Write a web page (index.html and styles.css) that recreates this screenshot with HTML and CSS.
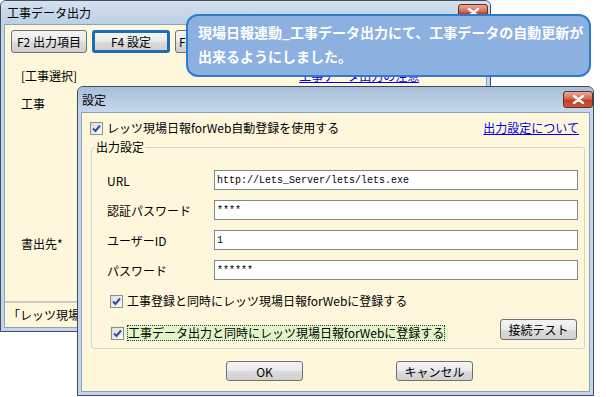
FILE: index.html
```html
<!DOCTYPE html>
<html lang="ja">
<head>
  <meta charset="UTF-8">
  <title>工事データ出力</title>
  <link rel="stylesheet" href="styles.css">
</head>
<body>

<div class="win main">
  <div class="titlebar">
    <span class="title">工事データ出力</span>
    <span class="close"><svg width="13" height="9" viewBox="0 0 13 9"><path d="M2 1 L11 8 M11 1 L2 8" stroke="#fff" stroke-width="2.4" stroke-linecap="round"/></svg></span>
  </div>
  <div class="client">
    <div class="toolbar">
      <button class="btn tool">F2 出力項目</button>
      <button class="btn tool focus">F4 設定</button>
      <button class="btn tool">F5</button>
    </div>
    <div class="mrow sel">
      <span>[工事選択]</span>
      <a class="link note" href="#">工事データ出力の注意</a>
    </div>
    <div class="mrow kouji">工事</div>
    <div class="mrow dest">書出先*</div>
    <div class="status">「レッツ現場日報forWeb」</div>
  </div>
</div>

<div class="win dialog">
  <div class="titlebar dtitle">
    <span class="title">設定</span>
    <span class="close"><svg width="13" height="9" viewBox="0 0 13 9"><path d="M2 1 L11 8 M11 1 L2 8" stroke="#fff" stroke-width="2.4" stroke-linecap="round"/></svg></span>
  </div>
  <div class="client dclient">
    <div class="userow">
      <label class="check"><span class="box"><svg width="11" height="11" viewBox="0 0 11 11"><path d="M2 5.5 L4.5 8 L9 2.5" fill="none" stroke="#2b4f95" stroke-width="2"/></svg></span>レッツ現場日報forWeb自動登録を使用する</label>
      <a class="link" href="#">出力設定について</a>
    </div>

    <fieldset class="group">
      <legend>出力設定</legend>
      <div class="fields">
        <span>URL</span>
        <input class="field" type="text" value="http://Lets_Server/lets/lets.exe" readonly>
        <span>認証パスワード</span>
        <input class="field" type="text" value="****" readonly>
        <span>ユーザーID</span>
        <input class="field" type="text" value="1" readonly>
        <span>パスワード</span>
        <input class="field" type="text" value="******" readonly>
      </div>
      <div class="crow first">
        <label class="check"><span class="box"><svg width="11" height="11" viewBox="0 0 11 11"><path d="M2 5.5 L4.5 8 L9 2.5" fill="none" stroke="#2b4f95" stroke-width="2"/></svg></span>工事登録と同時にレッツ現場日報forWebに登録する</label>
      </div>
      <div class="crow second">
        <label class="check hl"><span class="box"><svg width="11" height="11" viewBox="0 0 11 11"><path d="M2 5.5 L4.5 8 L9 2.5" fill="none" stroke="#2b4f95" stroke-width="2"/></svg></span><span class="focustext">工事データ出力と同時にレッツ現場日報forWebに登録する</span></label>
        <button class="btn test">接続テスト</button>
      </div>
    </fieldset>

    <div class="actions">
      <button class="btn act">OK</button>
      <button class="btn act">キャンセル</button>
    </div>
  </div>
</div>

<div class="callout">
  現場日報連動_工事データ出力にて、工事データの自動更新が<br>
  出来るようにしました。
</div>

</body>
</html>
```

FILE: styles.css
```css
* {
  box-sizing: border-box;
}

body {
  margin: 0;
  width: 606px;
  height: 397px;
  position: relative;
  overflow: hidden;
  background: #fff;
  font-family: "Noto Sans CJK JP", sans-serif;
  font-size: 12px;
  color: #000;
}

/* windows on the desktop */
.win {
  position: absolute;
  display: flex;
  flex-direction: column;
  border: 1px solid #3f4d5c;
  border-radius: 6px 6px 0 0;
  background: #c3d5ea;
}

.main {
  left: 0;
  top: 0;
  width: 491px;
  height: 332px;
}

.dialog {
  left: 77px;
  top: 86px;
  width: 517px;
  height: 310px;
}

.titlebar {
  height: 23px;
  display: flex;
  align-items: center;
  justify-content: space-between;
  padding: 0 2px 0 6px;
  background: linear-gradient(#d4e1ef, #bccfe5);
  border-radius: 5px 5px 0 0;
}

.dtitle {
  height: 25px;
  padding: 0 0 0 4px;
  background: linear-gradient(#a7bed8, #c6d8ed);
}

.title {
  line-height: 14px;
}

.close {
  width: 30px;
  height: 17px;
  display: flex;
  align-items: center;
  justify-content: center;
  border: 1px solid #6a2a1f;
  border-radius: 3px;
  background: linear-gradient(#e8ab9d, #d36a52 45%, #bf3f26 55%, #c95a3f);
}

.client {
  flex: 1;
  display: flex;
  flex-direction: column;
  margin: 0 3px 3px;
  background: #fff7dc;
  border: 1px solid #8aa3bf;
}

/* buttons */
.btn {
  height: 21px;
  padding: 0;
  border: 1px solid #707070;
  border-radius: 3px;
  background: linear-gradient(#f4f4f4 0%, #ebebeb 48%, #dcdcdc 52%, #d0d0d0 100%);
  font-family: inherit;
  font-size: 12px;
  color: #000;
}

/* main window */
.toolbar {
  display: flex;
  gap: 5px;
  padding: 5px 0 0 6px;
}

.tool {
  width: 76px;
  height: 23px;
}

.tool:last-child {
  text-align: left;
  padding-left: 3px;
}

.tool.focus {
  width: 78px;
  border: 3px solid #1b6db5;
}

.mrow {
  padding-left: 16px;
  line-height: 14px;
}

.sel {
  display: flex;
  margin-top: 16px;
}

.note {
  margin-left: 222px;
}

.kouji {
  margin-top: 14px;
}

.dest {
  margin-top: 126px;
}

.status {
  margin-top: auto;
  height: 26px;
  line-height: 24px;
  padding-left: 3px;
  border-top: 2px solid #c9c9c0;
}

.link {
  color: #0000ee;
  text-decoration: underline;
}

/* dialog */
.userow {
  display: flex;
  justify-content: space-between;
  align-items: center;
  padding: 7px 10px 0 8px;
  line-height: 16px;
}

.check {
  display: flex;
  align-items: center;
  gap: 4px;
  line-height: 16px;
}

.box {
  width: 13px;
  height: 13px;
  display: flex;
  align-items: center;
  justify-content: center;
  border: 1px solid #8e8f8f;
  background: linear-gradient(135deg, #dcdcdc, #fbfbfb);
}

.group {
  margin: 4px 4px 0 9px;
  padding: 16px 6px 8px 15px;
  border: 1px solid #d5d6c8;
  border-radius: 3px;
}

.group legend {
  padding: 0 1px;
  margin-left: -12px;
  line-height: 14px;
}

.fields {
  display: grid;
  grid-template-columns: 107px 1fr;
  row-gap: 10px;
  align-items: center;
}

.field {
  height: 20px;
  padding: 0 2px;
  border: 1px solid #7e8791;
  background: #fff;
  font-family: "Liberation Mono", monospace;
  font-size: 10px;
  color: #000;
  outline: none;
}

.crow {
  display: flex;
  justify-content: space-between;
  align-items: flex-end;
  padding-left: 3px;
}

.crow.first {
  margin-top: 13px;
}

.crow.second {
  margin-top: 10px;
}

.hl {
  padding: 0 4px 0 1px;
  background: #e2f7c9;
}

.focustext {
  outline: 1px dotted #333;
  line-height: 14px;
}

.test {
  width: 77px;
  margin-right: 1px;
}

.actions {
  display: flex;
  gap: 93px;
  padding: 12px 0 0 144px;
}

.act {
  width: 77px;
  height: 20px;
}

/* callout over the windows */
.callout {
  position: absolute;
  left: 186px;
  top: 14px;
  width: 405px;
  height: 63px;
  padding: 4px 0 0 10px;
  border: 2px solid #2b7bcf;
  border-radius: 12px;
  background: #8cb1e1;
  color: #fff;
  font-size: 14px;
  font-weight: bold;
  line-height: 24px;
  white-space: nowrap;
}
```
